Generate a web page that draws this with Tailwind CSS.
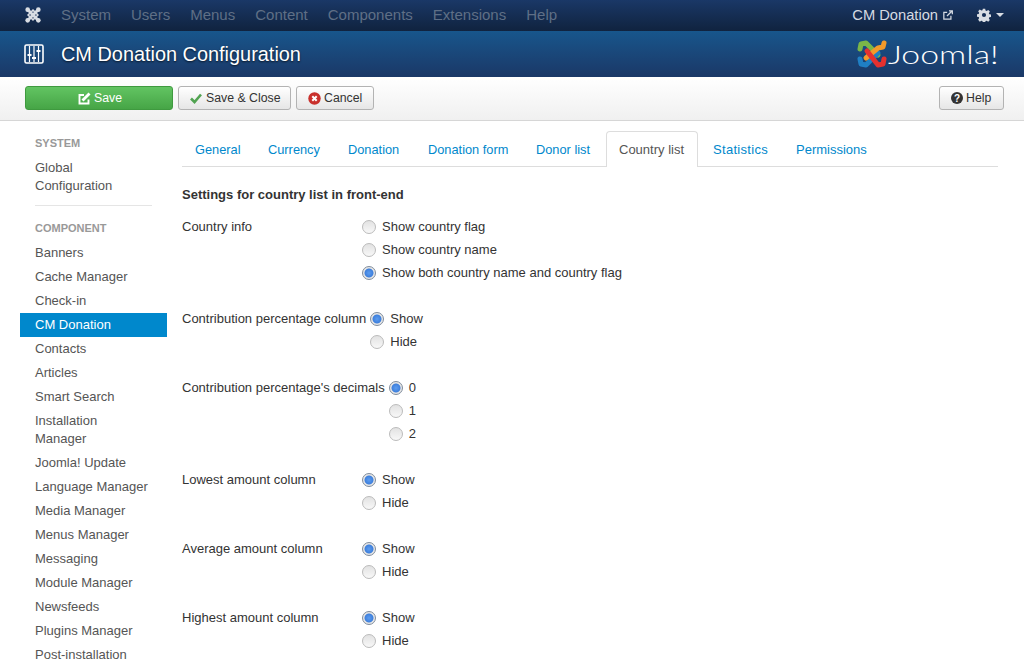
<!DOCTYPE html>
<html lang="en">
<head>
  <meta charset="UTF-8">
  <title>CM Donation Configuration</title>
  <script src="https://cdn.jsdelivr.net/npm/@tailwindcss/browser@4"></script>
</head>
<body class="h-[664px] overflow-hidden bg-white font-['Liberation_Sans',Arial,sans-serif] text-[13px] leading-[18px] text-[#333]">

  <!-- Top menu -->
  <nav class="flex h-[31px] items-center bg-linear-to-b from-[#1a3867] to-[#10233f] pb-[2px] pl-[25px] pr-[20px] text-[15px] text-[#5f6f86]">
    <svg class="mr-[20px] h-[16px] w-[16px]" viewBox="0 0 18 18">
      <g stroke="#d9dde3" fill="none" stroke-linecap="round">
        <path d="M4 4 14 14M14 4 4 14" stroke-width="3.4"/>
        <path d="M9 3.5 14.5 9 9 14.5 3.5 9Z" stroke-width="1.8"/>
      </g>
      <g fill="#d9dde3"><circle cx="3" cy="3" r="2.6"/><circle cx="15" cy="3" r="2.6"/><circle cx="3" cy="15" r="2.6"/><circle cx="15" cy="15" r="2.6"/></g>
    </svg>
    <div class="flex gap-[20px]">
      <span>System</span><span>Users</span><span>Menus</span><span>Content</span><span>Components</span><span>Extensions</span><span>Help</span>
    </div>
    <div class="ml-auto flex items-center text-[14.7px] text-[#d5dae2]">
      <span>CM Donation</span>
      <svg class="ml-[5px] h-[10px] w-[10px]" viewBox="0 0 12 12" fill="none" stroke="#d5dae2" stroke-width="1.5"><path d="M9.5 7v4H1V2.8H5"/><path d="M4.8 7.2 10.5 1.5M7.2 1h4v4"/></svg>
      <svg class="ml-[24px] h-[14px] w-[14px]" viewBox="0 0 14 14"><path fill="#d9dde3" fill-rule="evenodd" d="M5.7 0h2.6l.4 2 1.2.5 1.8-1.1 1.8 1.8-1.1 1.8.5 1.2 2 .4v2.6l-2 .4-.5 1.2 1.1 1.8-1.8 1.8-1.8-1.1-1.2.5-.4 2H5.7l-.4-2-1.2-.5-1.8 1.1L.5 12.2l1.1-1.8-.5-1.2-2-.4V6.2l2-.4.5-1.2L.5 2.8l1.8-1.8 1.8 1.1 1.2-.5ZM7 4.7a2.3 2.3 0 1 0 0 4.6 2.3 2.3 0 0 0 0-4.6Z" transform="translate(.7 .7) scale(.9)"/></svg>
      <span class="ml-[5px] h-0 w-0 border-x-[4px] border-t-[4px] border-x-transparent border-t-[#d9dde3]"></span>
    </div>
  </nav>

  <!-- Title bar -->
  <header class="flex h-[46px] items-center bg-linear-to-b from-[#17568c] to-[#1a3867] pl-[24px] pr-[26px]">
    <svg class="mr-[17px] h-[20px] w-[20px]" viewBox="0 0 20 20" fill="none" stroke="#fff">
      <rect x="1" y="1" width="18" height="18" rx="1.5" stroke-width="1.6"/>
      <path d="M5.5 2v16M10 2v16M14.5 2v16" stroke-width="1.2"/>
      <path d="M3.5 11h4M8 14h4M12.5 7h4" stroke-width="2.2"/>
    </svg>
    <h1 class="text-[19.9px] leading-[24px] text-white [text-shadow:0_1px_2px_rgba(0,0,0,0.7)]">CM Donation Configuration</h1>
    <div class="ml-auto flex w-[142px] items-center">
      <svg class="h-[32px] w-[32px] shrink-0" viewBox="0 0 32 32" fill="none" stroke-width="5" stroke-linecap="round" stroke-linejoin="round">
        <path d="M4 11 5 6 10 5 22 17" stroke="#7ab648"/>
        <path d="M4 21 5 26 10 27 22 15" stroke="#1f7fc4"/>
        <path d="M28 5 27 9 22 10 10 20" stroke="#f39a2a"/>
        <path d="M28 21 27 26 22 27 11 13" stroke="#e5312f"/>
      </svg>
      <span class="inline-block origin-left scale-x-[1.3] font-['Lato',sans-serif] text-[26px] leading-[32px] font-light text-white">Joomla!</span>
    </div>
  </header>

  <!-- Toolbar -->
  <div class="flex h-[44px] items-center border-b border-[#d6d6d6] bg-linear-to-b from-white to-[#f0f0f0] pb-[1px] pl-[25px] pr-[20px] text-[12.3px]">
    <button class="flex h-[24px] w-[148px] items-center justify-center rounded-[3px] border border-[#3f9a3f] bg-linear-to-b from-[#62c462] to-[#46a546] pl-[2px] text-white">
      <svg class="mr-[3px] h-[13px] w-[13px]" viewBox="0 0 13 13" fill="none" stroke="#fff" stroke-width="1.9"><path d="M10.5 7.5v4H1.5V3H6"/><path d="M4.5 8.5 11.5 1.5" stroke-width="2.8"/></svg>
      Save
    </button>
    <button class="ml-[5px] flex h-[24px] w-[113px] items-center rounded-[3px] border border-[#b3b3b3] bg-linear-to-b from-white to-[#e6e6e6] pl-[11px]">
      <svg class="mr-[4px] h-[12px] w-[12px]" viewBox="0 0 12 12" fill="none" stroke="#51a351" stroke-width="2.6"><path d="M1 6.5 4.5 10 11 2.5"/></svg>
      Save &amp; Close
    </button>
    <button class="ml-[5px] flex h-[24px] w-[78px] items-center rounded-[3px] border border-[#b3b3b3] bg-linear-to-b from-white to-[#e6e6e6] pl-[11px]">
      <svg class="mr-[3px] h-[13px] w-[13px]" viewBox="0 0 13 13"><circle cx="6.5" cy="6.5" r="6.2" fill="#c9302c"/><path d="M4.3 4.3 8.7 8.7M8.7 4.3 4.3 8.7" stroke="#fff" stroke-width="2"/></svg>
      Cancel
    </button>
    <button class="ml-auto flex h-[24px] w-[65px] items-center rounded-[3px] border border-[#b3b3b3] bg-linear-to-b from-white to-[#e6e6e6] pl-[11px]">
      <svg class="mr-[3px] h-[12px] w-[12px]" viewBox="0 0 12 12"><circle cx="6" cy="6" r="6" fill="#333"/><text x="6" y="9.5" text-anchor="middle" font-size="10" font-weight="700" fill="#fff" font-family="Liberation Sans">?</text></svg>
      Help
    </button>
  </div>

  <div class="flex pl-[20px] pr-[26px]">
    <!-- Sidebar -->
    <aside class="w-[147px] shrink-0 pt-[10px] text-[#555]">
      <div class="px-[15px] pt-[3px] pb-[4px] text-[11px] font-bold text-[#999]">SYSTEM</div>
      <div class="px-[15px] py-[3px]">Global Configuration</div>
      <div class="mx-[15px] mt-[7px] mb-[10px] border-b border-[#e5e5e5]"></div>
      <div class="px-[15px] pt-[3px] pb-[4px] text-[11px] font-bold text-[#999]">COMPONENT</div>
      <ul>
        <li class="px-[15px] py-[3px]">Banners</li>
        <li class="px-[15px] py-[3px]">Cache Manager</li>
        <li class="px-[15px] py-[3px]">Check-in</li>
        <li class="bg-[#0088cc] px-[15px] py-[3px] text-white">CM Donation</li>
        <li class="px-[15px] py-[3px]">Contacts</li>
        <li class="px-[15px] py-[3px]">Articles</li>
        <li class="px-[15px] py-[3px]">Smart Search</li>
        <li class="px-[15px] py-[3px]">Installation Manager</li>
        <li class="px-[15px] py-[3px]">Joomla! Update</li>
        <li class="px-[15px] py-[3px]">Language Manager</li>
        <li class="px-[15px] py-[3px]">Media Manager</li>
        <li class="px-[15px] py-[3px]">Menus Manager</li>
        <li class="px-[15px] py-[3px]">Messaging</li>
        <li class="px-[15px] py-[3px]">Module Manager</li>
        <li class="px-[15px] py-[3px]">Newsfeeds</li>
        <li class="px-[15px] py-[3px]">Plugins Manager</li>
        <li class="px-[15px] py-[3px]">Post-installation</li>
      </ul>
    </aside>

    <!-- Main -->
    <main class="ml-[15px] flex-1 pt-[10px]">
      <div class="flex h-[36px] border-b border-[#ddd] text-[12.8px] text-[#0088cc]">
        <span class="w-[73px] pt-[10px] pl-[13px]">General</span>
        <span class="w-[80px] pt-[10px] pl-[13px]">Currency</span>
        <span class="w-[80px] pt-[10px] pl-[13px]">Donation</span>
        <span class="w-[108px] pt-[10px] pl-[13px]">Donation form</span>
        <span class="w-[83px] pt-[10px] pl-[13px]">Donor list</span>
        <span class="mb-[-1px] h-[36px] w-[92px] rounded-t-[4px] border border-b-0 border-[#ddd] bg-white pt-[9px] pl-[12px] text-[13px] text-[#555]">Country list</span>
        <span class="w-[83px] pt-[10px] pl-[15px] text-[13px] tracking-[0.3px]">Statistics</span>
        <span class="pt-[10px] pl-[15px] text-[13px]">Permissions</span>
      </div>

      <h2 class="mt-[19px] font-bold">Settings for country list in front-end</h2>

      <div class="mt-[14px] flex flex-col gap-[28px]">
        <div class="flex">
          <label class="w-[180px]">Country info</label>
          <div class="flex flex-col gap-[5px]">
            <label class="flex items-center"><input type="radio" name="info" class="mr-[6px] h-[14px] w-[14px] appearance-none rounded-full border border-[#bbb] bg-linear-to-b from-[#e2e2e2] to-[#f8f8f8] checked:border-[#7f8c9c] checked:bg-[radial-gradient(circle,#5b9cf0_0,#3f80dc_48%,#e6e6e6_58%)]">Show country flag</label>
            <label class="flex items-center"><input type="radio" name="info" class="mr-[6px] h-[14px] w-[14px] appearance-none rounded-full border border-[#bbb] bg-linear-to-b from-[#e2e2e2] to-[#f8f8f8] checked:border-[#7f8c9c] checked:bg-[radial-gradient(circle,#5b9cf0_0,#3f80dc_48%,#e6e6e6_58%)]">Show country name</label>
            <label class="flex items-center"><input type="radio" name="info" checked class="mr-[6px] h-[14px] w-[14px] appearance-none rounded-full border border-[#bbb] bg-linear-to-b from-[#e2e2e2] to-[#f8f8f8] checked:border-[#7f8c9c] checked:bg-[radial-gradient(circle,#5b9cf0_0,#3f80dc_48%,#e6e6e6_58%)]">Show both country name and country flag</label>
          </div>
        </div>

        <div class="flex">
          <label class="min-w-[180px] pr-[4px]">Contribution percentage column</label>
          <div class="flex flex-col gap-[5px]">
            <label class="flex items-center"><input type="radio" name="pct" checked class="mr-[6px] h-[14px] w-[14px] appearance-none rounded-full border border-[#bbb] bg-linear-to-b from-[#e2e2e2] to-[#f8f8f8] checked:border-[#7f8c9c] checked:bg-[radial-gradient(circle,#5b9cf0_0,#3f80dc_48%,#e6e6e6_58%)]">Show</label>
            <label class="flex items-center"><input type="radio" name="pct" class="mr-[6px] h-[14px] w-[14px] appearance-none rounded-full border border-[#bbb] bg-linear-to-b from-[#e2e2e2] to-[#f8f8f8] checked:border-[#7f8c9c] checked:bg-[radial-gradient(circle,#5b9cf0_0,#3f80dc_48%,#e6e6e6_58%)]">Hide</label>
          </div>
        </div>

        <div class="flex">
          <label class="min-w-[180px] pr-[4px]">Contribution percentage's decimals</label>
          <div class="flex flex-col gap-[5px]">
            <label class="flex items-center"><input type="radio" name="dec" checked class="mr-[6px] h-[14px] w-[14px] appearance-none rounded-full border border-[#bbb] bg-linear-to-b from-[#e2e2e2] to-[#f8f8f8] checked:border-[#7f8c9c] checked:bg-[radial-gradient(circle,#5b9cf0_0,#3f80dc_48%,#e6e6e6_58%)]">0</label>
            <label class="flex items-center"><input type="radio" name="dec" class="mr-[6px] h-[14px] w-[14px] appearance-none rounded-full border border-[#bbb] bg-linear-to-b from-[#e2e2e2] to-[#f8f8f8] checked:border-[#7f8c9c] checked:bg-[radial-gradient(circle,#5b9cf0_0,#3f80dc_48%,#e6e6e6_58%)]">1</label>
            <label class="flex items-center"><input type="radio" name="dec" class="mr-[6px] h-[14px] w-[14px] appearance-none rounded-full border border-[#bbb] bg-linear-to-b from-[#e2e2e2] to-[#f8f8f8] checked:border-[#7f8c9c] checked:bg-[radial-gradient(circle,#5b9cf0_0,#3f80dc_48%,#e6e6e6_58%)]">2</label>
          </div>
        </div>

        <div class="flex">
          <label class="w-[180px]">Lowest amount column</label>
          <div class="flex flex-col gap-[5px]">
            <label class="flex items-center"><input type="radio" name="low" checked class="mr-[6px] h-[14px] w-[14px] appearance-none rounded-full border border-[#bbb] bg-linear-to-b from-[#e2e2e2] to-[#f8f8f8] checked:border-[#7f8c9c] checked:bg-[radial-gradient(circle,#5b9cf0_0,#3f80dc_48%,#e6e6e6_58%)]">Show</label>
            <label class="flex items-center"><input type="radio" name="low" class="mr-[6px] h-[14px] w-[14px] appearance-none rounded-full border border-[#bbb] bg-linear-to-b from-[#e2e2e2] to-[#f8f8f8] checked:border-[#7f8c9c] checked:bg-[radial-gradient(circle,#5b9cf0_0,#3f80dc_48%,#e6e6e6_58%)]">Hide</label>
          </div>
        </div>

        <div class="flex">
          <label class="w-[180px]">Average amount column</label>
          <div class="flex flex-col gap-[5px]">
            <label class="flex items-center"><input type="radio" name="avg" checked class="mr-[6px] h-[14px] w-[14px] appearance-none rounded-full border border-[#bbb] bg-linear-to-b from-[#e2e2e2] to-[#f8f8f8] checked:border-[#7f8c9c] checked:bg-[radial-gradient(circle,#5b9cf0_0,#3f80dc_48%,#e6e6e6_58%)]">Show</label>
            <label class="flex items-center"><input type="radio" name="avg" class="mr-[6px] h-[14px] w-[14px] appearance-none rounded-full border border-[#bbb] bg-linear-to-b from-[#e2e2e2] to-[#f8f8f8] checked:border-[#7f8c9c] checked:bg-[radial-gradient(circle,#5b9cf0_0,#3f80dc_48%,#e6e6e6_58%)]">Hide</label>
          </div>
        </div>

        <div class="flex">
          <label class="w-[180px]">Highest amount column</label>
          <div class="flex flex-col gap-[5px]">
            <label class="flex items-center"><input type="radio" name="high" checked class="mr-[6px] h-[14px] w-[14px] appearance-none rounded-full border border-[#bbb] bg-linear-to-b from-[#e2e2e2] to-[#f8f8f8] checked:border-[#7f8c9c] checked:bg-[radial-gradient(circle,#5b9cf0_0,#3f80dc_48%,#e6e6e6_58%)]">Show</label>
            <label class="flex items-center"><input type="radio" name="high" class="mr-[6px] h-[14px] w-[14px] appearance-none rounded-full border border-[#bbb] bg-linear-to-b from-[#e2e2e2] to-[#f8f8f8] checked:border-[#7f8c9c] checked:bg-[radial-gradient(circle,#5b9cf0_0,#3f80dc_48%,#e6e6e6_58%)]">Hide</label>
          </div>
        </div>
      </div>
    </main>
  </div>
</body>
</html>
